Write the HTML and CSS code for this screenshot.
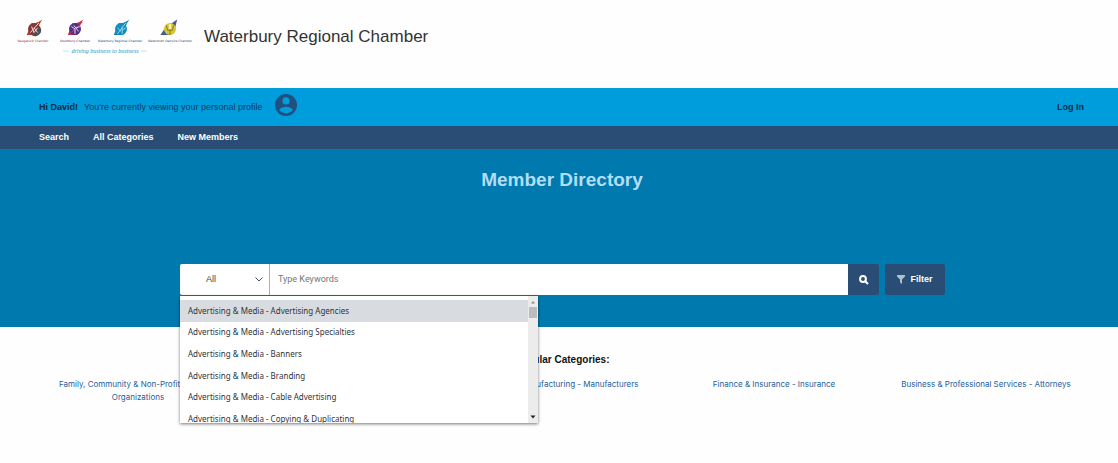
FILE: index.html
```
<!DOCTYPE html>
<html lang="en">
<head>
<meta charset="utf-8">
<title>Waterbury Regional Chamber</title>
<link rel="stylesheet" href="styles.css">
</head>
<body>
<header class="brand">
  <svg class="logo" viewBox="0 0 180 40" role="img" aria-label="Chambers driving business to business">
    <defs>
      <path id="needle" d="M-6 5 L-2 -5 Q1 -4 7 -8 Q4 -4 4 -1 L2 5Z"/>
    </defs>
    <g transform="translate(20 10) scale(1.2)">
      <use href="#needle" fill="#b5392f"/>
      <circle r="5" fill="#823a38"/>
      <path d="M4 -3A5 5 0 0 1 -2 5Q4 3 4 -3Z" fill="#4a5254"/>
      <path d="M-3 3L4 -5M-2 -2L0 3L3 -1M0 -1L3 3" stroke="#f5dfd8" stroke-width=".8" fill="none"/>
    </g>
    <g transform="translate(61 10) scale(1.2)">
      <use href="#needle" fill="#c92b40"/>
      <circle r="5" fill="#51308a"/>
      <path d="M-3 3L6 -6" stroke="#cf3048" fill="none"/>
      <path d="M-3 -2L0 0L0 4M-1 -3L3 2M1 -1L4 -2" stroke="#e5dcf3" stroke-width=".8" fill="none"/>
    </g>
    <g transform="translate(107 10) scale(1.2)">
      <use href="#needle" fill="#1785b2"/>
      <circle r="5" fill="#168bc0"/>
      <path d="M-3 4L4 -5M-3 -1L0 2M1 -2L1 4M1 1L4 -1" stroke="#8de0f2" stroke-width=".8" fill="none"/>
    </g>
    <g transform="translate(156 10) scale(1.2)">
      <path d="M-8 5L-4 -1L6 -8L4 0L0 5Z" fill="#45598a"/>
      <circle r="5" fill="#d4c532"/>
      <path d="M-3 -3L-2 1H2L3 -3M0 1V5" stroke="#807632" stroke-width=".8" fill="none"/>
      <path d="M-1 -4H1V0H-1Z" fill="#fff4a0"/>
    </g>
    <g class="logo-names" text-anchor="middle">
      <text x="19" y="23" fill="#a03030">Naugatuck Chamber</text>
      <text x="61" y="23" fill="#5b2475">Southbury Chamber</text>
      <text x="106" y="23" fill="#17488a">Waterbury Regional Chamber</text>
      <text x="156" y="23" fill="#35496c">Watertown Oakville Chamber</text>
    </g>
    <text class="logo-tagline" x="91" y="34" text-anchor="middle">driving business to business</text>
    <path d="M49 32H55M127 32H133" stroke="#a7dced" stroke-width=".7"/>
  </svg>
  <span class="brand-name">Waterbury Regional Chamber</span>
</header>

<div class="account">
  <p class="greeting"><strong>Hi David!</strong> <span>You're currently viewing your personal profile</span></p>
  <svg class="avatar" viewBox="0 0 24 24" aria-hidden="true"><circle cx="12" cy="12" r="12"/><circle class="cut" cx="12" cy="7.500" r="3.900"/><path class="cut" d="M4.500 17.300C6 14.800 9.500 13.800 12 13.800s6 1 7.500 3.500C17.900 19.700 15.200 21.200 12 21.200s-5.900-1.500-7.500-3.900Z"/></svg>
  <a class="login" href="#login">Log In</a>
</div>

<nav class="nav">
  <a href="#search">Search</a>
  <a href="#categories">All Categories</a>
  <a href="#members">New Members</a>
</nav>

<main>
  <section class="hero">
    <h1>Member Directory</h1>
    <form class="search">
      <div class="category">
        <select aria-label="Category"><option>All</option></select>
        <svg class="chevron" viewBox="0 0 8 5" aria-hidden="true"><path d="M.5 .5L4 4L7.500 .5"/></svg>
        <div class="menu">
          <ul role="listbox" aria-label="Categories">
            <li class="active" role="option" aria-selected="true">Advertising &amp; Media - Advertising Agencies</li>
            <li role="option">Advertising &amp; Media - Advertising Specialties</li>
            <li role="option">Advertising &amp; Media - Banners</li>
            <li role="option">Advertising &amp; Media - Branding</li>
            <li role="option">Advertising &amp; Media - Cable Advertising</li>
            <li role="option">Advertising &amp; Media - Copying &amp; Duplicating</li>
          </ul>
          <div class="scrollbar" aria-hidden="true">
            <svg viewBox="0 0 6 4"><path d="M1 3.500L3 1L5 3.500Z" fill="#8b8b8b"/></svg>
            <span class="thumb"></span>
            <svg class="down" viewBox="0 0 6 4"><path d="M.5 .5H5.500L3 3.500Z" fill="#222"/></svg>
          </div>
        </div>
      </div>
      <input class="keywords" type="text" placeholder="Type Keywords" aria-label="Keywords">
      <button class="go" type="submit" aria-label="Search"><svg viewBox="0 0 10 10"><circle cx="4" cy="4" r="2.900"/><path d="M6.200 6.200L9 9"/></svg></button>
      <button class="filter" type="button"><svg viewBox="0 0 8 9" aria-hidden="true"><path d="M0 0H8V1.500L5 4.500V9L3 7.500V4.500L0 1.500Z"/></svg>Filter</button>
    </form>
  </section>

  <section class="popular">
    <h2>Popular Categories:</h2>
    <ul class="links">
      <li><a href="#c1">Family, Community &amp; Non-Profit - Service Organizations</a></li>
      <li></li>
      <li><a href="#c3">Goods &amp; Manufacturing - Manufacturers</a></li>
      <li><a href="#c4">Finance &amp; Insurance - Insurance</a></li>
      <li><a href="#c5">Business &amp; Professional Services - Attorneys</a></li>
    </ul>
  </section>
</main>
</body>
</html>
```
FILE: styles.css
```
* { box-sizing: border-box; }
body {
  margin: 0;
  min-height: 100vh;
  background: #fefefe;
  color: #222;
  font: 9px/13px "Liberation Sans", Arial, sans-serif;
}
ul, p, h1, h2 { margin: 0; padding: 0; }
ul { list-style: none; }
a { text-decoration: none; color: inherit; }
button, input, select { font: inherit; border: 0; border-radius: 0; margin: 0; }

.brand {
  display: flex;
  align-items: center;
  height: 88px;
  padding: 0 14px 14px;
  gap: 10px;
}
.logo { width: 180px; height: 40px; margin-top: 4px; }
.logo-names { font: 3px "DejaVu Sans", sans-serif; }
.logo-tagline { font: italic 6px "Liberation Serif", serif; fill: #1598cd; }
.brand-name { font-size: 17px; line-height: 24px; color: #333; }

.account {
  display: flex;
  align-items: center;
  min-height: 38px;
  padding: 0 34px 0 39px;
  background: #009ddc;
}
.greeting { display: flex; gap: 6px; color: #0b3c5c; }
.greeting strong { color: #0c2a40; }
.avatar { width: 22px; height: 22px; margin: 0 auto 4px 12px; fill: #20507f; }
.avatar .cut { fill: #009ddc; }
.login { color: #0c2a40; font-weight: bold; }

.nav {
  display: flex;
  align-items: center;
  gap: 24px;
  min-height: 23px;
  padding: 0 39px;
  background: #294d74;
  color: #fff;
  font-weight: bold;
}

.hero {
  padding: 19px 26px 32px 32px;
  background: #0079ae;
}
.hero h1 {
  margin-bottom: 72px;
  color: #b3ddf3;
  font-size: 19px;
  line-height: 24px;
  text-align: center;
}
.search { display: flex; height: 31px; margin: 0 147px 0 148px; }
.category { position: relative; width: 90px; border-right: 1px solid #9db5c3; }
.category select {
  width: 100%;
  height: 100%;
  padding: 0 26px;
  appearance: none;
  background: #fff;
  color: #444;
  border-radius: 2px 0 0 2px;
}
.chevron { position: absolute; right: 6px; top: 13px; width: 8px; height: 5px; fill: none; stroke: #3c4f60; }
.keywords { flex: 1; min-width: 0; padding: 0 8px; background: #fff; font-family: Roboto, sans-serif; }
.keywords::placeholder { color: #777; opacity: 1; }
.go, .filter {
  display: flex;
  align-items: center;
  justify-content: center;
  background: #294d74;
  color: #fff;
  font-weight: bold;
}
.go { width: 31px; margin-right: 6px; padding: 0; border-radius: 0 2px 2px 0; }
.go svg { width: 10px; height: 10px; fill: none; stroke: #fff; stroke-width: 2; }
.filter { width: 60px; gap: 5px; padding: 0; border-radius: 2px; }
.filter svg { width: 8px; height: 9px; fill: #aebfd0; }

.menu {
  position: absolute;
  z-index: 2;
  top: 32px;
  left: 0;
  display: flex;
  width: 358px;
  height: 127px;
  overflow: hidden;
  background: #fff;
  box-shadow: 0 1px 3px #0008;
}
.menu ul {
  flex: 1;
  display: grid;
  grid-auto-rows: 1fr;
  height: 130px;
  margin-top: 4px;
  color: #333;
  font: 8px/20px "Noto Sans", sans-serif;
}
.menu li { display: flex; align-items: center; padding: 0 8px; }
.menu .active { background: #d8dbe0; }
.scrollbar {
  display: flex;
  flex-direction: column;
  align-items: center;
  width: 10px;
  padding: 4px 0;
  background: #ececec;
}
.scrollbar svg { width: 6px; height: 4px; }
.thumb { width: 8px; height: 11px; margin-top: 3px; background: #bcbcbc; }
.scrollbar .down { margin-top: auto; }

.popular { padding: 26px 26px 32px 32px; text-align: center; }
.popular h2 { margin-bottom: 12px; font-size: 10px; line-height: 13px; color: #111; }
.links {
  display: grid;
  grid-template-columns: repeat(5, 1fr);
  color: #23619a;
  font: 8px/13px Inter, sans-serif;
}
.links li { padding: 0 16px; }
```
